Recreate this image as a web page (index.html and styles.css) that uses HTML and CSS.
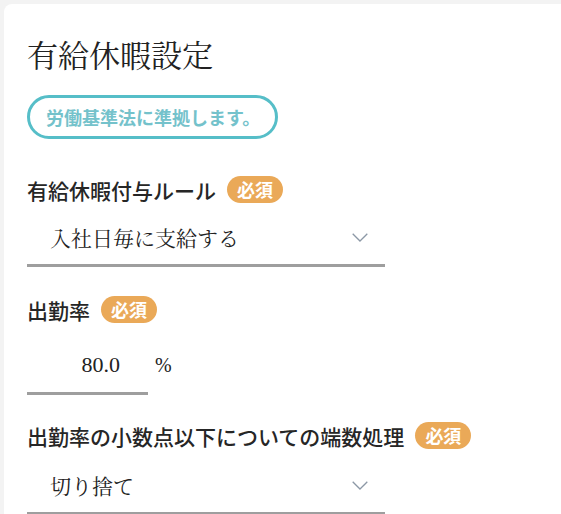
FILE: index.html
```html
<!DOCTYPE html>
<html lang="ja">
<head>
<meta charset="utf-8">
<title>有給休暇設定</title>
<link rel="stylesheet" href="styles.css">
</head>
<body>
<main class="card">
  <h1 class="title">有給休暇設定</h1>
  <div class="notice">労働基準法に準拠します。</div>

  <section class="field">
    <div class="label-row"><span class="label">有給休暇付与ルール</span><span class="badge">必須</span></div>
    <div class="select select-1">
      <span class="select-text">入社日毎に支給する</span>
      <svg class="chevron" width="16" height="9" viewBox="0 0 16 9"><polyline points="0.7,0.7 8,8 15.3,0.7" fill="none" stroke="#8c98a6" stroke-width="1.3"/></svg>
    </div>
  </section>

  <section class="field field-2">
    <div class="label-row"><span class="label">出勤率</span><span class="badge">必須</span></div>
    <div class="number-row">
      <div class="number-input">80.0</div>
      <span class="unit">%</span>
    </div>
  </section>

  <section class="field field-3">
    <div class="label-row"><span class="label">出勤率の小数点以下についての端数処理</span><span class="badge">必須</span></div>
    <div class="select select-2">
      <span class="select-text">切り捨て</span>
      <svg class="chevron" width="16" height="9" viewBox="0 0 16 9"><polyline points="0.7,0.7 8,8 15.3,0.7" fill="none" stroke="#8c98a6" stroke-width="1.3"/></svg>
    </div>
  </section>
</main>
</body>
</html>
```
FILE: styles.css
```css
html, body {
  margin: 0;
  padding: 0;
  background: #f3f3f3;
  overflow: hidden;
  height: 100%;
}

.card {
  margin: 4px 0 0 4px;
  background: #ffffff;
  border-top-left-radius: 8px;
  padding: 30px 0 40px 23px;
  min-height: 600px;
  box-sizing: border-box;
}

.title {
  margin: 0;
  font-family: "Noto Serif CJK JP", "Liberation Serif", serif;
  font-weight: 400;
  font-size: 31px;
  line-height: 40px;
  color: #222222;
}

.notice {
  display: inline-block;
  margin-top: 21px;
  height: 38px;
  line-height: 38px;
  padding: 0 15px 0 16px;
  border: 3px solid #56bec8;
  border-radius: 22px;
  color: #74c2cb;
  font-family: "Noto Sans CJK JP", sans-serif;
  font-weight: 700;
  font-size: 18px;
}

.field {
  margin-top: 37px;
}

.field-2 {
  margin-top: 29px;
}

.field-3 {
  margin-top: 27px;
}

.label-row {
  display: flex;
  align-items: center;
  height: 27px;
}

.label {
  font-family: "Noto Sans CJK JP", sans-serif;
  font-weight: 500;
  font-size: 21px;
  color: #262626;
}

.badge {
  margin-left: 11px;
  height: 27px;
  line-height: 27px;
  padding: 0 10px;
  border-radius: 14px;
  background: #eaa958;
  color: #ffffff;
  font-family: "Noto Sans CJK JP", sans-serif;
  font-weight: 700;
  font-size: 18px;
}

.select {
  display: flex;
  align-items: center;
  justify-content: space-between;
  width: 318px;
  height: 40px;
  padding: 0 17px 7px 23px;
  border-bottom: 3px solid #9e9e9e;
  margin-top: 14px;
}

.select-2 {
  margin-top: 16px;
}

.select-text {
  font-family: "Noto Serif CJK JP", "Liberation Serif", serif;
  font-size: 21px;
  color: #222222;
}

.chevron {
  display: block;
}

.number-row {
  display: flex;
  align-items: center;
  margin-top: 22px;
}

.number-input {
  width: 93px;
  height: 40px;
  line-height: 40px;
  padding: 0 28px 7px 0;
  text-align: right;
  border-bottom: 3px solid #9e9e9e;
  font-family: "Liberation Serif", serif;
  font-size: 22px;
  color: #222222;
}

.unit {
  margin-left: 7px;
  margin-bottom: 10px;
  font-family: "Liberation Serif", serif;
  font-size: 20px;
  color: #222222;
}
```
